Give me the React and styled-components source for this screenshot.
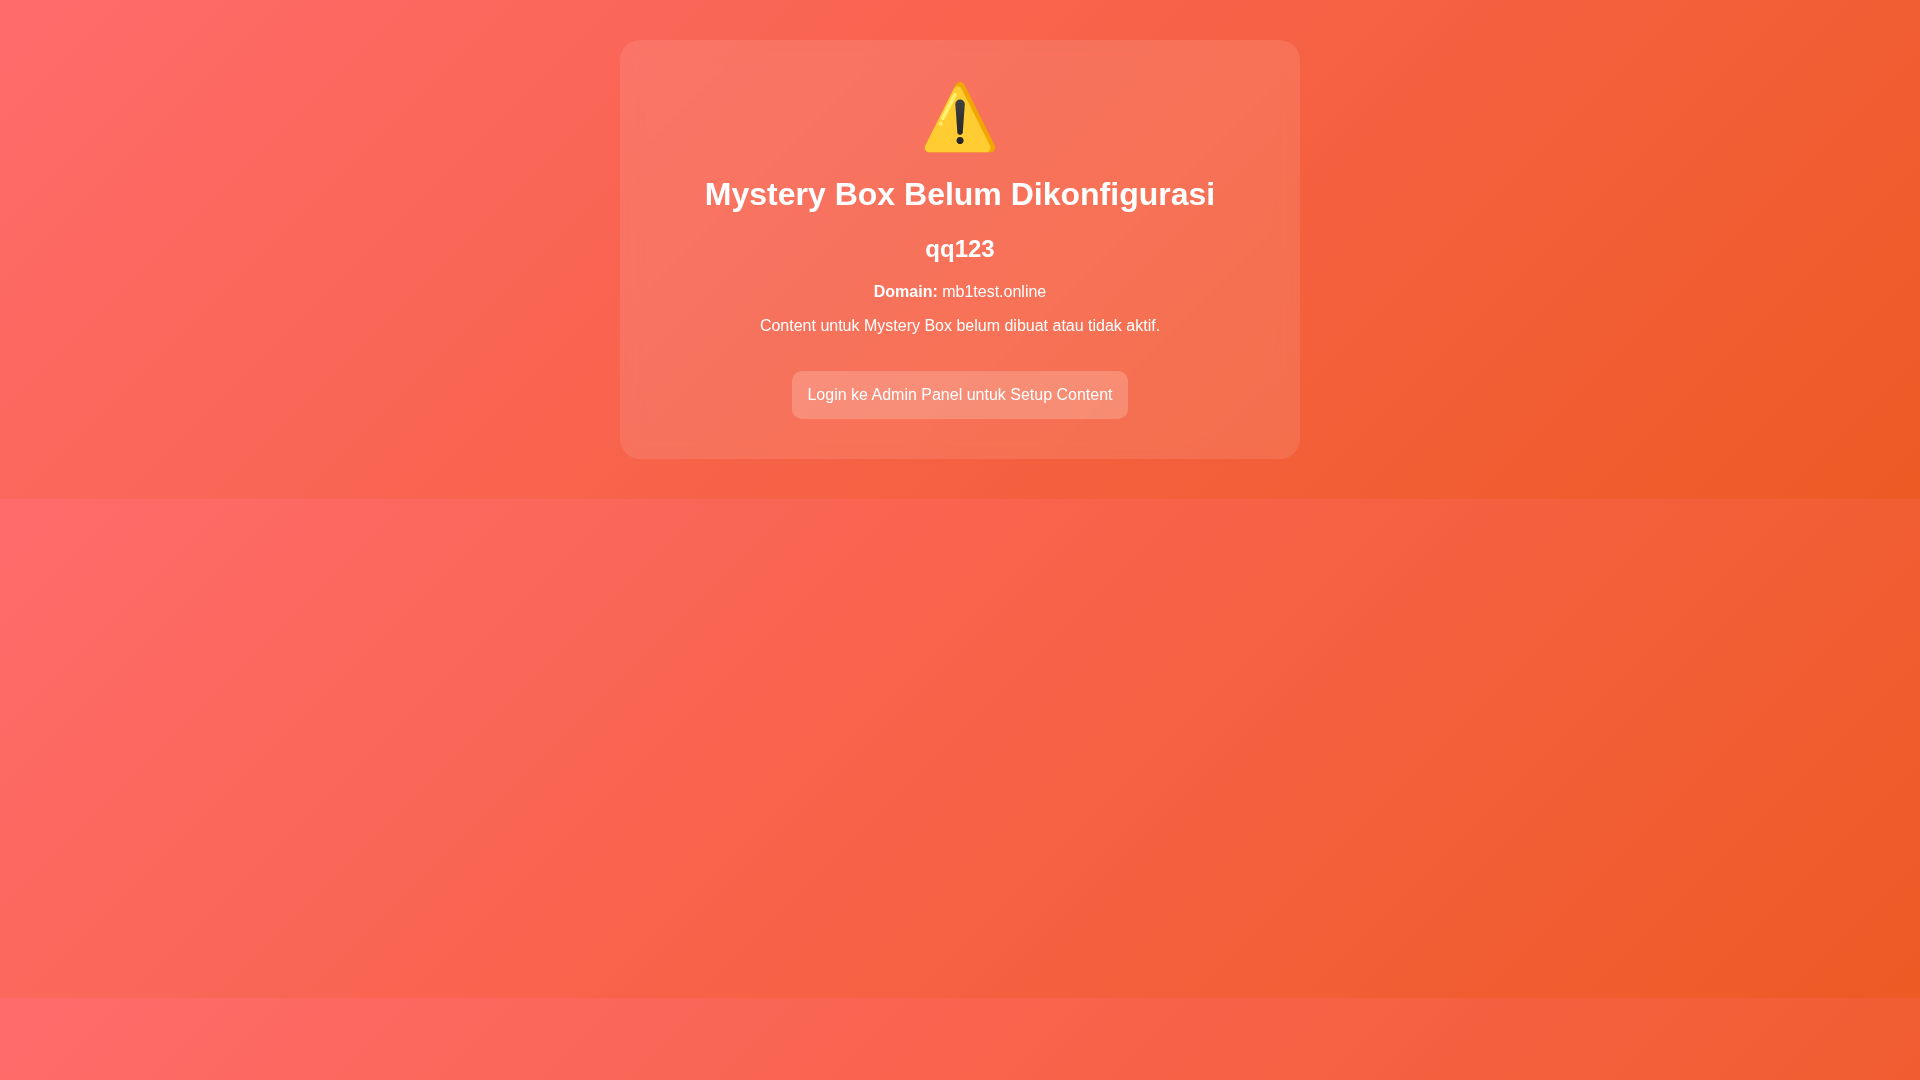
import styled, { createGlobalStyle } from 'styled-components'

const GlobalStyle = createGlobalStyle`
    body {
        margin: 0;
        padding: 40px;
        font-family: "Liberation Sans", Arial, sans-serif;
        font-size: 16px;
        text-align: center;
        color: white;
        background: linear-gradient(135deg, #ff6b6b, #ee5a24);
    }
`

const Card = styled.main`
    max-width: 600px;
    margin: 0 auto;
    padding: 40px;
    border-radius: 20px;
    background: rgba(255, 255, 255, 0.1);
    backdrop-filter: blur(10px);
`

const Icon = styled.div`
    margin-bottom: 20px;
    font-size: 64px;
`

/* headings keep the browser's own margins */
const Title = styled.h1`
    font-size: 32px;
`

const SiteName = styled.h2`
    font-size: 24px;
`

const Text = styled.p`
    margin: 16px 0;
`

const LoginLink = styled.a`
    display: inline-block;
    margin-top: 20px;
    padding: 15px;
    border-radius: 10px;
    color: white;
    text-decoration: none;
    background: rgba(255, 255, 255, 0.2);
`

const App = () => {
    return (
        <>
            <GlobalStyle />
            <Card>
                <Icon>⚠️</Icon>
                <Title>Mystery Box Belum Dikonfigurasi</Title>
                <SiteName>qq123</SiteName>
                <Text><strong>Domain:</strong> mb1test.online</Text>
                <Text>Content untuk Mystery Box belum dibuat atau tidak aktif.</Text>
                <LoginLink href="/admin">Login ke Admin Panel untuk Setup Content</LoginLink>
            </Card>
        </>
    )
}

export default App
